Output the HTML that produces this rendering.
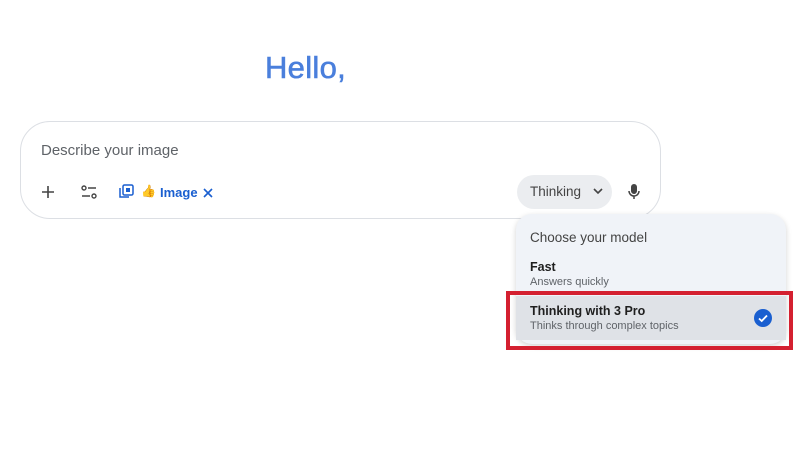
<!DOCTYPE html>
<html><head><meta charset="utf-8"><style>
*{margin:0;padding:0;box-sizing:border-box}
body{width:800px;height:452px;background:#fff;font-family:"Liberation Sans",Arial,sans-serif;position:relative;overflow:hidden;color:#1f1f1f}
.hello{position:absolute;left:265px;top:50px;font-size:31px;color:#4a7fdc;-webkit-text-stroke:0.6px #4a7fdc;letter-spacing:0.3px}
.box{position:absolute;left:20px;top:121px;width:641px;height:98px;border:1px solid #dcdfe4;border-radius:30px;background:#fff}
.ph{position:absolute;left:20px;top:20px;font-size:15px;color:#5f6368}
.ic{position:absolute}
.img{position:absolute;left:139px;top:63px;font-size:13px;color:#1a5fd0;font-weight:bold}
.pill{position:absolute;left:496px;top:53px;width:95px;height:34px;border-radius:17px;background:#ebedf0;font-size:13.5px;color:#444;padding:9px 0 0 13px;white-space:nowrap}
.menu{position:absolute;left:516px;top:214px;width:270px;height:130px;background:#f0f3f8;border-radius:16px;box-shadow:0 2px 6px rgba(0,0,0,.18)}
.t1{position:absolute;left:14px;top:16px;font-size:13.5px;color:#444}
.t2{position:absolute;left:14px;top:46px;font-size:12.5px;color:#1f1f1f;font-weight:bold}
.s2{position:absolute;left:14px;top:62px;font-size:11px;color:#5f6368}
.sel{position:absolute;left:0;top:82px;width:270px;height:44px;background:#dfe2e7}
.red{position:absolute;left:506px;top:291px;width:287px;height:59px;border:4px solid #d42030}
.chk{position:absolute;left:238px;top:13px;width:18px;height:18px;border-radius:50%;background:#1a5fd0}
</style></head><body>
<div class="hello">Hello,</div>
<div class="box">
 <div class="ph">Describe your image</div>
 <svg class="ic" style="left:19px;top:62px" width="16" height="16" viewBox="0 0 16 16"><path d="M8 2v12M2 8h12" stroke="#444" stroke-width="1.6"/></svg>
 <svg class="ic" style="left:60px;top:63px" width="16" height="14" viewBox="0 0 16 14"><circle cx="3" cy="3" r="2" fill="none" stroke="#444" stroke-width="1.4"/><path d="M7 3h8M1 11h8" stroke="#444" stroke-width="1.4"/><circle cx="13" cy="11" r="2" fill="none" stroke="#444" stroke-width="1.4"/></svg>
 <svg class="ic" style="left:98px;top:62px" width="15" height="15" viewBox="0 0 15 15"><rect x="4" y="1" width="10" height="10" rx="1.5" fill="none" stroke="#1a5fd0" stroke-width="1.5"/><path d="M1 4v9h9" fill="none" stroke="#1a5fd0" stroke-width="1.5"/><rect x="7" y="4" width="4" height="4" fill="#1a5fd0"/></svg>
 <span class="ic" style="left:120px;top:62px;font-size:12px;color:#f0a030">👍</span>
 <div class="img">Image</div>
 <svg class="ic" style="left:182px;top:66px" width="10" height="10" viewBox="0 0 10 10"><path d="M1 1l8 8M9 1l-8 8" stroke="#1a5fd0" stroke-width="1.6"/></svg>
 <div class="pill">Thinking<svg style="margin-left:12px;vertical-align:1px" width="10" height="7" viewBox="0 0 10 7"><path d="M1 1l4 4 4-4" fill="none" stroke="#444" stroke-width="1.6"/></svg></div>
 <svg class="ic" style="left:607px;top:62px" width="12" height="16" viewBox="0 0 12 16"><rect x="3" y="0" width="6" height="10" rx="3" fill="#444"/><path d="M1 7a5 5 0 0 0 10 0M6 12v3" fill="none" stroke="#444" stroke-width="1.5"/></svg>
</div>
<div class="menu">
 <div class="t1">Choose your model</div>
 <div class="t2">Fast</div>
 <div class="s2">Answers quickly</div>
 <div class="sel">
  <div class="t2" style="top:8px">Thinking with 3 Pro</div>
  <div class="s2" style="top:24px">Thinks through complex topics</div>
  <div class="chk"><svg width="18" height="18" viewBox="0 0 18 18"><path d="M5 9.5l2.7 2.5L13 6.5" fill="none" stroke="#fff" stroke-width="1.8"/></svg></div>
 </div>
</div>
<div class="red"></div>
</body></html>
